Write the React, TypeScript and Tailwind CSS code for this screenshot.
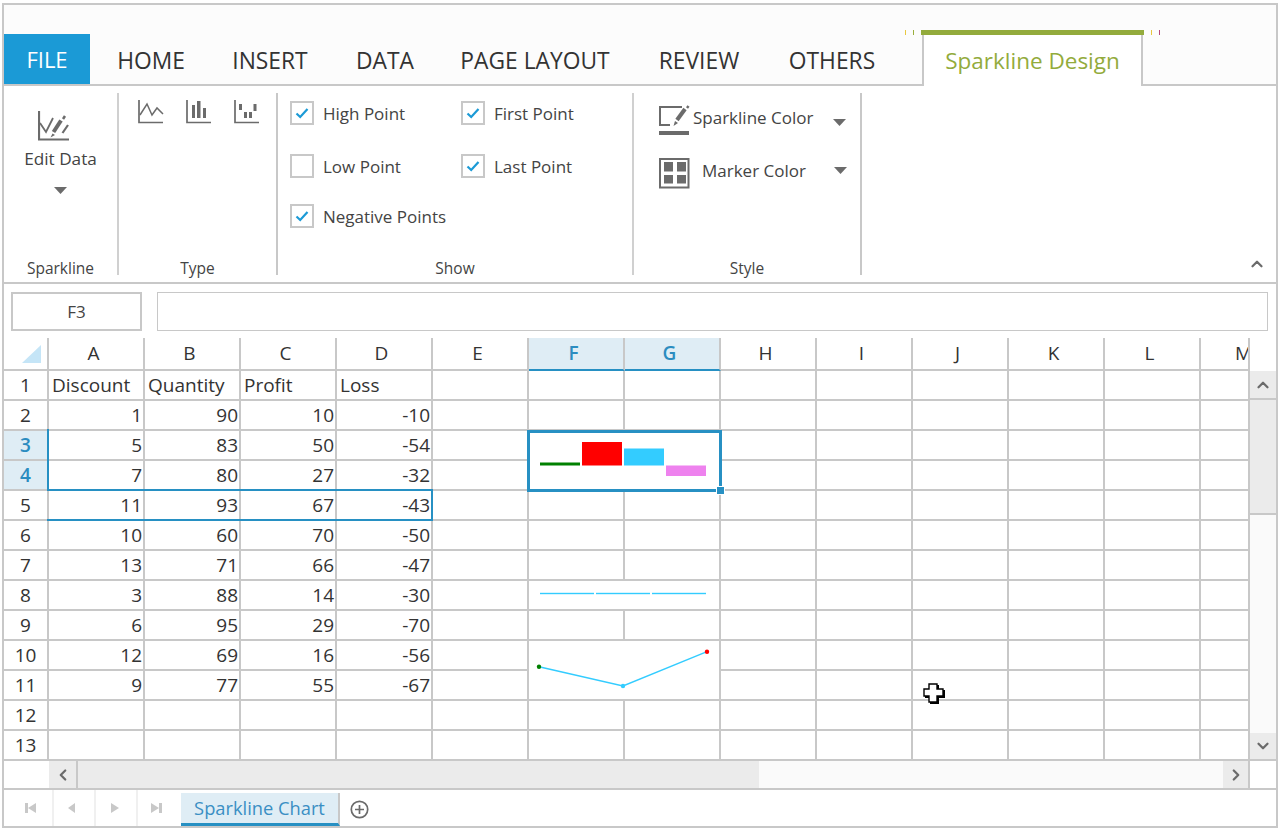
import { ChevronDown, ChevronLeft, ChevronRight, ChevronUp } from "lucide-react";

const columns = ["A", "B", "C", "D", "E", "F", "G", "H", "I", "J", "K", "L", "M"];

const data: (string | number)[][] = [
  ["Discount", "Quantity", "Profit", "Loss"],
  [1, 90, 10, -10],
  [5, 83, 50, -54],
  [7, 80, 27, -32],
  [11, 93, 67, -43],
  [10, 60, 70, -50],
  [13, 71, 66, -47],
  [3, 88, 14, -30],
  [6, 95, 29, -70],
  [12, 69, 16, -56],
  [9, 77, 55, -67],
];

const tabs = [
  { label: "HOME", width: "w-[122px]" },
  { label: "INSERT", width: "w-[116px]" },
  { label: "DATA", width: "w-[114px]" },
  { label: "PAGE LAYOUT", width: "w-[186px]" },
  { label: "REVIEW", width: "w-[142px]" },
  { label: "OTHERS", width: "w-[124px]" },
];

const grey = "#6b6b6b";

const DownArrow = () => (
  <svg width="13" height="7" viewBox="0 0 13 7">
    <polygon points="0,0 13,0 6.5,7" fill={grey} />
  </svg>
);

const Check = ({ checked }: { checked: boolean }) => (
  <div className="w-[24px] h-[24px] border-2 border-[#c8c8c8] bg-white flex items-center justify-center">
    {checked && (
      <svg width="14" height="12" viewBox="0 0 14 12">
        <path d="M1.5 6.5 L5.2 10 L12.5 2" fill="none" stroke="#1b9ad6" strokeWidth="2.2" />
      </svg>
    )}
  </div>
);

const CheckRow = ({ label, checked }: { label: string; checked: boolean }) => (
  <div className="flex items-center gap-[9px] h-[24px] text-[17px] text-[#444]">
    <Check checked={checked} />
    <span className="pt-[1px]">{label}</span>
  </div>
);

const EditDataIcon = () => (
  <svg width="32" height="32" viewBox="38 110 32 32">
    <path d="M39 111 V139.5 H69" fill="none" stroke={grey} strokeWidth="2.2" />
    <path d="M40 123 L46 132 L53 118" fill="none" stroke={grey} strokeWidth="1.8" />
    <path d="M53.5 132 L61 120.5" fill="none" stroke={grey} strokeWidth="4" />
    <path d="M50.5 137.5 L52.5 133.5 L55 135 Z" fill={grey} />
    <path d="M63 119 L65 116" fill="none" stroke={grey} strokeWidth="2.5" />
    <path d="M62.5 133 L68 125" fill="none" stroke={grey} strokeWidth="2.2" />
  </svg>
);

const LineTypeIcon = () => (
  <svg width="26" height="24" viewBox="138 100 26 24">
    <path d="M139 100 V122.5 H163" fill="none" stroke={grey} strokeWidth="1.7" />
    <path d="M140 115 L147 104 L152 115 L157 108 L163 114" fill="none" stroke={grey} strokeWidth="1.5" />
  </svg>
);

const ColumnTypeIcon = () => (
  <svg width="26" height="24" viewBox="186 100 26 24">
    <path d="M187 100 V122.5 H211" fill="none" stroke={grey} strokeWidth="1.7" />
    <rect x="192" y="105" width="3" height="13" fill={grey} />
    <rect x="197" y="101" width="3.5" height="17" fill={grey} />
    <rect x="203" y="108" width="3" height="10" fill={grey} />
  </svg>
);

const WinLossTypeIcon = () => (
  <svg width="26" height="24" viewBox="234 100 26 24">
    <path d="M235 100 V122.5 H259" fill="none" stroke={grey} strokeWidth="1.7" />
    <rect x="239" y="104" width="3" height="6" fill={grey} />
    <rect x="244" y="112" width="3" height="6" fill={grey} />
    <rect x="249" y="112" width="3" height="6" fill={grey} />
    <rect x="253.5" y="104" width="3" height="7" fill={grey} />
  </svg>
);

const SparklineColorIcon = () => (
  <svg width="31" height="31" viewBox="659 105 31 31">
    <path d="M682 107 H660 V125 H670" fill="none" stroke={grey} strokeWidth="2" />
    <rect x="659" y="131" width="30" height="4" fill={grey} />
    <path d="M677 120 L685 109" fill="none" stroke={grey} strokeWidth="4" />
    <path d="M673.5 126 L675 121 L678 123 Z" fill={grey} />
    <path d="M687 108 L688.5 106" fill="none" stroke={grey} strokeWidth="2.5" />
  </svg>
);

const MarkerColorIcon = () => (
  <svg width="31" height="31" viewBox="659 158 31 31">
    <rect x="660" y="159" width="28.5" height="28.5" fill="none" stroke={grey} strokeWidth="2" />
    <rect x="664" y="162" width="9" height="9.5" fill={grey} />
    <rect x="677" y="162" width="9" height="9.5" fill={grey} />
    <rect x="664" y="175" width="9" height="8.5" fill={grey} />
    <rect x="677" y="175" width="9" height="8.5" fill={grey} />
  </svg>
);

const ColumnSparkline = () => (
  <svg className="absolute left-0 top-0" width="192" height="60" viewBox="529 431 192 60">
    <rect x="540" y="462.5" width="40" height="3" fill="#008000" />
    <rect x="582" y="442" width="40" height="23.5" fill="#ff0000" />
    <rect x="624" y="448.5" width="40" height="17" fill="#33ccff" />
    <rect x="666" y="465.5" width="40" height="10.5" fill="#ee82ee" />
  </svg>
);

const FlatSparkline = () => (
  <svg className="absolute left-0 top-0" width="192" height="28" viewBox="529 581 192 28">
    <rect x="540" y="592.8" width="54" height="1.4" fill="#33ccff" />
    <rect x="596" y="592.8" width="54" height="1.4" fill="#33ccff" />
    <rect x="652" y="592.8" width="54" height="1.4" fill="#33ccff" />
  </svg>
);

const LineSparkline = () => (
  <svg className="absolute left-0 top-0" width="192" height="58" viewBox="529 641 192 58">
    <path d="M539 666.7 L623 686 L707 651.7" fill="none" stroke="#33ccff" strokeWidth="1.4" />
    <circle cx="539" cy="666.7" r="2.2" fill="#008000" />
    <circle cx="623" cy="686" r="2.2" fill="#33ccff" />
    <circle cx="707" cy="651.7" r="2.2" fill="#ff0000" />
  </svg>
);

const isSkipped = (row: number, col: string) =>
  (col === "G" && (row === 3 || row === 4 || row === 8 || row === 10 || row === 11)) ||
  (col === "F" && (row === 4 || row === 11));

const cellBase = "border-r-2 border-b-2 border-[#c8c8c8] relative flex items-center overflow-hidden";

const Sheet = () => (
  <div className="relative grid grid-cols-[45px_repeat(12,96px)_49px] grid-rows-[33px_repeat(13,30px)] text-[19px] text-[#333] leading-none">
    <div className={cellBase}>
      <svg className="absolute left-[18px] top-[7px]" width="19" height="18" viewBox="0 0 19 18">
        <polygon points="19,0 19,18 0,18" fill="#c5e5f7" />
      </svg>
    </div>
    {columns.map((c) =>
      c === "F" || c === "G" ? (
        <div key={c} className="border-r-2 border-[#c8c8c8] border-b-2 border-b-[#2790c3] bg-[#dfedf5] flex items-center justify-center pr-[5px] font-semibold text-[#2b8cc0]">
          {c}
        </div>
      ) : c === "M" ? (
        <div key={c} className={`${cellBase} justify-start pl-[34px]`}>
          {c}
        </div>
      ) : (
        <div key={c} className={`${cellBase} justify-center pr-[5px]`}>
          {c}
        </div>
      )
    )}
    {Array.from({ length: 13 }, (_, i) => i + 1).map((row) => (
      <Row key={row} row={row} />
    ))}

    {/* selected data range */}
    <div className="absolute left-[43px] top-[91px] w-[2px] h-[62px] bg-[#2790c3]" />
    <div className="absolute left-[43px] top-[151px] w-[386px] h-[32px] border-2 border-l-0 border-[#2790c3]" />

    {/* selected sparkline cell */}
    <div className="absolute left-[523px] top-[92px] w-[195px] h-[62px] border-[3px] border-[#2790c3]" />
    <div className="absolute left-[712px] top-[148px] w-[9px] h-[9px] bg-[#2790c3] border border-white" />
  </div>
);

const Row = ({ row }: { row: number }) => {
  const highlighted = row === 3 || row === 4;
  const values = data[row - 1] ?? [];
  return (
    <>
      {highlighted ? (
        <div className="border-r-2 border-b-2 border-[#c8c8c8] bg-[#dfedf5] flex items-center justify-center pt-[1px] font-semibold text-[#2b8cc0]">
          {row}
        </div>
      ) : (
        <div className={`${cellBase} justify-center pt-[1px]`}>{row}</div>
      )}
      {columns.map((col, c) => {
        if (isSkipped(row, col)) return null;
        if (col === "F" && row === 3)
          return (
            <div key={col} className={`${cellBase} col-span-2 row-span-2`}>
              <ColumnSparkline />
            </div>
          );
        if (col === "F" && row === 8)
          return (
            <div key={col} className={`${cellBase} col-span-2`}>
              <FlatSparkline />
            </div>
          );
        if (col === "F" && row === 10)
          return (
            <div key={col} className={`${cellBase} col-span-2 row-span-2`}>
              <LineSparkline />
            </div>
          );
        const v = values[c];
        return (
          <div
            key={col}
            className={`${cellBase} pt-[1px] ${typeof v === "number" ? "justify-end pr-[1px]" : "justify-start pl-[3px]"}`}
          >
            {v}
          </div>
        );
      })}
    </>
  );
};

const NavIcon = ({ points, bar }: { points: string; bar?: number }) => (
  <svg width="14" height="14" viewBox="0 0 14 14">
    <polygon points={points} fill="#c8c8c8" />
    {bar !== undefined && <rect x={bar} y="2" width="3" height="10" fill="#c8c8c8" />}
  </svg>
);

export default function App() {
  return (
    <div className="w-[1282px] h-[832px] bg-white overflow-hidden pl-[2px] pt-[3px] font-['Open_Sans',sans-serif]">
      <div className="relative w-[1276px] h-[825px] border-2 border-[#c8c8c8] flex flex-col">
        {/* tab strip */}
        <div className="relative h-[81px] bg-[#fcfcfc] border-b-2 border-[#c8c8c8] flex items-end text-[22.8px] text-[#333] leading-none">
          <div className="w-[86px] h-[50px] bg-[#1b9ad6] text-white text-[22px] flex items-center justify-center">
            FILE
          </div>
          {tabs.map((t) => (
            <div key={t.label} className={`${t.width} h-[50px] flex items-center justify-center pt-[5px]`}>
              {t.label}
            </div>
          ))}
          <div className="relative ml-[27px] -mb-[2px] w-[223px] h-[56px] flex flex-col">
            <div className="absolute -left-[16px] top-0 w-[1px] h-[5px] bg-[#e8c840]" />
            <div className="absolute -left-[8px] top-0 w-[1px] h-[5px] bg-[#9aae3c]" />
            <div className="absolute -right-[8px] top-0 w-[1px] h-[5px] bg-[#e8c840]" />
            <div className="absolute -right-[16px] top-0 w-[1px] h-[5px] bg-[#b5487c]" />
            <div className="h-[5px] bg-[#93ab3c]" />
            <div className="flex-1 mx-[1px] bg-white border-x-2 border-[#c8c8c8] flex items-center justify-center text-[22.5px] text-[#93ab3c] pt-[1px]">
              Sparkline Design
            </div>
          </div>
        </div>

        {/* ribbon */}
        <div className="relative h-[198px] bg-white border-b-2 border-[#c8c8c8] flex py-[7px] text-[#444]">
          <div className="w-[115px] border-r-2 border-[#d0d0d0] flex flex-col items-center">
            <div className="mt-[17px] mr-[13px]">
              <EditDataIcon />
            </div>
            <div className="mt-[4px] text-[17.2px] leading-[26px]">Edit Data</div>
            <div className="mt-[15px]">
              <DownArrow />
            </div>
            <div className="mt-auto text-[15.5px] leading-[14px]">Sparkline</div>
          </div>
          <div className="w-[159px] border-r-2 border-[#c8c8c8] flex flex-col">
            <div className="flex gap-[22px] pl-[19px] pt-[7px]">
              <LineTypeIcon />
              <ColumnTypeIcon />
              <WinLossTypeIcon />
            </div>
            <div className="mt-auto text-center text-[15.5px] leading-[14px]">Type</div>
          </div>
          <div className="w-[356px] border-r-2 border-[#d0d0d0] flex flex-col">
            <div className="grid grid-cols-[171px_1fr] grid-rows-[53px_50px_24px] pl-[12px] pt-[8px]">
              <CheckRow label="High Point" checked />
              <CheckRow label="First Point" checked />
              <CheckRow label="Low Point" checked={false} />
              <CheckRow label="Last Point" checked />
              <CheckRow label="Negative Points" checked />
            </div>
            <div className="mt-auto text-center text-[15.5px] leading-[14px]">Show</div>
          </div>
          <div className="w-[228px] border-r-2 border-[#c8c8c8] flex flex-col">
            <div className="pl-[25px] pt-[12px] flex flex-col gap-[22px] text-[17px]">
              <div className="flex items-center h-[31px]">
                <SparklineColorIcon />
                <span className="ml-[3px] w-[140px] pb-[6px]">Sparkline Color</span>
                <div className="mt-[3px]">
                  <DownArrow />
                </div>
              </div>
              <div className="flex items-center h-[31px]">
                <MarkerColorIcon />
                <span className="ml-[12px] w-[132px] pb-[6px]">Marker Color</span>
                <div className="mb-[6px]">
                  <DownArrow />
                </div>
              </div>
            </div>
            <div className="mt-auto text-center text-[15.5px] leading-[14px]">Style</div>
          </div>
          <div className="ml-auto self-end mr-[10px] mb-[2px]">
            <ChevronUp size={18} strokeWidth={3} color={grey} />
          </div>
        </div>

        {/* formula bar */}
        <div className="h-[54px] flex items-start pt-[8px] pl-[7px] gap-[15px] text-[17px] text-[#444]">
          <div className="w-[131px] h-[39px] border-2 border-[#c8c8c8] flex items-center justify-center">F3</div>
          <div className="w-[1111px] h-[39px] border border-[#c8c8c8]" />
        </div>

        {/* grid and vertical scrollbar */}
        <div className="flex">
          <Sheet />
          <div className="w-[26px] flex flex-col border-b-2 border-[#c8c8c8]">
            <div className="h-[33px]" />
            <div className="h-[27px] bg-[#ebebeb] flex items-center justify-center">
              <ChevronUp size={18} strokeWidth={3} color={grey} />
            </div>
            <div className="h-[117px] bg-[#ebebeb] border-y-2 border-[#c8c8c8]" />
            <div className="h-[218px] bg-[#fafafa]" />
            <div className="h-[26px] bg-[#ebebeb] flex items-center justify-center">
              <ChevronDown size={18} strokeWidth={3} color={grey} />
            </div>
          </div>
        </div>

        {/* horizontal scrollbar */}
        <div className="h-[29px] flex border-b-2 border-[#c8c8c8]">
          <div className="w-[45px]" />
          <div className="w-[27px] bg-[#ebebeb] border-r-0 flex items-center justify-center">
            <ChevronLeft size={18} strokeWidth={3} color={grey} />
          </div>
          <div className="w-[683px] bg-[#ebebeb] border-l-2 border-[#c8c8c8]" />
          <div className="w-[464px] bg-[#fafafa]" />
          <div className="w-[25px] bg-[#ebebeb] flex items-center justify-center">
            <ChevronRight size={18} strokeWidth={3} color={grey} />
          </div>
          <div className="w-[2px] bg-[#c8c8c8]" />
        </div>

        {/* sheet tabs */}
        <div className="h-[36px] flex items-end">
          <div className="w-[50px] h-full border-r-2 border-[#f0f0f0] flex items-center justify-center pl-[4px]">
            <NavIcon points="13,2 13,12 5,7" bar={2} />
          </div>
          <div className="w-[42px] h-full border-r-2 border-[#f0f0f0] flex items-center justify-center pr-[4px]">
            <NavIcon points="10,2 10,12 3,7" />
          </div>
          <div className="w-[42px] h-full border-r-2 border-[#f0f0f0] flex items-center justify-center pr-[2px]">
            <NavIcon points="3,2 3,12 11,7" />
          </div>
          <div className="w-[43px] h-full flex items-center justify-center pr-[5px]">
            <NavIcon points="1,2 1,12 9,7" bar={9} />
          </div>
          <div className="w-[159px] h-[33px] bg-[#dfedf5] border-r-2 border-[#c8c8c8] border-b-[3px] border-b-[#2790c3] flex items-center justify-center text-[18.3px] text-[#3a8fc4]">
            Sparkline Chart
          </div>
          <div className="ml-[10px] self-center mt-[2px]">
            <svg width="19" height="19" viewBox="0 0 19 19">
              <circle cx="9.5" cy="9.5" r="8.2" fill="none" stroke={grey} strokeWidth="1.7" />
              <path d="M9.5 5 V14 M5 9.5 H14" stroke={grey} strokeWidth="1.7" />
            </svg>
          </div>
        </div>

        {/* mouse cursor */}
        <div className="absolute left-[919px] top-[678px]">
          <svg width="24" height="24" viewBox="0 0 24 24">
            <polygon points="7,2 16,2 16,7 22,7 22,15 16,15 16,21 7,21 7,15 2,15 2,7 7,7" fill="#000" />
            <polygon points="6,1 14,1 14,6 20,6 20,13 14,13 14,19 6,19 6,13 1,13 1,6 6,6" fill="#fff" stroke="#000" strokeWidth="1.4" />
          </svg>
        </div>
      </div>
    </div>
  );
}
